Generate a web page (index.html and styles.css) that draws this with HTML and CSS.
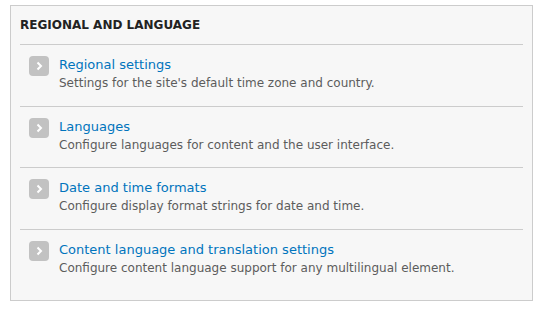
FILE: index.html
```html
<!DOCTYPE html>
<html lang="en">
<head>
    <meta charset="UTF-8">
    <title>Regional and language</title>
    <link rel="stylesheet" href="styles.css">
</head>
<body>
    <div class="admin-panel">
        <h3>Regional and language</h3>
        <ul class="admin-list">
            <li>
                <span class="arrow"><svg width="20" height="20" viewBox="0 0 20 20"><path d="M8.5 6.5 L12 10 L8.5 13.5" fill="none" stroke="#fff" stroke-width="2"/></svg></span>
                <div class="label">
                    <a href="#">Regional settings</a>
                    <div class="description">Settings for the site's default time zone and country.</div>
                </div>
            </li>
            <li>
                <span class="arrow"><svg width="20" height="20" viewBox="0 0 20 20"><path d="M8.5 6.5 L12 10 L8.5 13.5" fill="none" stroke="#fff" stroke-width="2"/></svg></span>
                <div class="label">
                    <a href="#">Languages</a>
                    <div class="description">Configure languages for content and the user interface.</div>
                </div>
            </li>
            <li>
                <span class="arrow"><svg width="20" height="20" viewBox="0 0 20 20"><path d="M8.5 6.5 L12 10 L8.5 13.5" fill="none" stroke="#fff" stroke-width="2"/></svg></span>
                <div class="label">
                    <a href="#">Date and time formats</a>
                    <div class="description">Configure display format strings for date and time.</div>
                </div>
            </li>
            <li>
                <span class="arrow"><svg width="20" height="20" viewBox="0 0 20 20"><path d="M8.5 6.5 L12 10 L8.5 13.5" fill="none" stroke="#fff" stroke-width="2"/></svg></span>
                <div class="label">
                    <a href="#">Content language and translation settings</a>
                    <div class="description">Configure content language support for any multilingual element.</div>
                </div>
            </li>
        </ul>
    </div>
</body>
</html>
```

FILE: styles.css
```css
body {
    margin: 0;
    padding: 5px 12px 0 10px;
    background: #fff;
    font-family: "DejaVu Sans", Verdana, sans-serif;
    font-size: 13px;
    color: #333;
}

.admin-panel {
    box-sizing: border-box;
    height: 296px;
    background: #f7f7f7;
    border: 1px solid #ccc;
    padding: 12px 9px 9px 9px;
}

.admin-panel h3 {
    margin: 0;
    padding: 0 0 12px;
    font-size: 12px;
    line-height: 14px;
    font-weight: bold;
    text-transform: uppercase;
    color: #222;
    border-bottom: 1px solid #ccc;
}

.admin-list {
    list-style: none;
    margin: 0;
    padding: 0;
}

.admin-list li {
    display: flex;
    gap: 10px;
    padding: 10px 9px 12.7px;
    border-bottom: 1px solid #ccc;
}

.admin-list li:last-child {
    border-bottom: none;
}

.arrow {
    flex: none;
    width: 20px;
    height: 20px;
    margin-top: 1px;
    background: #c2c2c2;
    border-radius: 4px;
}

.arrow svg {
    display: block;
}

.label a {
    display: block;
    color: #0074bd;
    text-decoration: none;
    line-height: 19px;
}

.description {
    font-size: 12px;
    line-height: 19px;
    color: #5c5c5c;
}
```
